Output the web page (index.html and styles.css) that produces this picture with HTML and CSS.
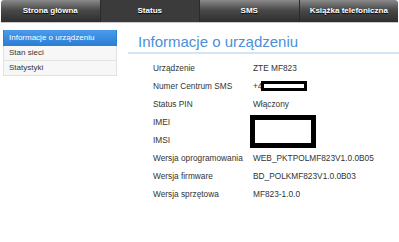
FILE: index.html
```html
<!DOCTYPE html>
<html lang="pl">
<head>
  <meta charset="UTF-8" />
  <title>Informacje o urządzeniu</title>
  <link rel="stylesheet" href="styles.css">
</head>
<body>

  <nav class="topnav">
    <a href="#">Strona główna</a>
    <a href="#" class="active">Status</a>
    <a href="#">SMS</a>
    <a href="#">Książka telefoniczna</a>
  </nav>

  <div class="layout">
    <ul class="sidemenu">
      <li class="selected">Informacje o urządzeniu</li>
      <li>Stan sieci</li>
      <li>Statystyki</li>
    </ul>

    <div class="content">
      <h1>Informacje o urządzeniu</h1>
      <table class="info">
        <tr><td>Urządzenie</td><td>ZTE MF823</td></tr>
        <tr><td>Numer Centrum SMS</td><td>+4<span class="mask-line"></span></td></tr>
        <tr><td>Status PIN</td><td>Włączony</td></tr>
        <tr><td>IMEI</td><td rowspan="2"><span class="mask-box"></span></td></tr>
        <tr><td>IMSI</td></tr>
        <tr><td>Wersja oprogramowania</td><td>WEB_PKTPOLMF823V1.0.0B05</td></tr>
        <tr><td>Wersja firmware</td><td>BD_POLKMF823V1.0.0B03</td></tr>
        <tr><td>Wersja sprzętowa</td><td>MF823-1.0.0</td></tr>
      </table>
    </div>
  </div>

</body>
</html>
```

FILE: styles.css
```css
body {
  margin: 0;
  background: #fff;
  font-family: 'Liberation Sans', Arial, sans-serif;
  color: #333;
  width: 399px;
  height: 242px;
  overflow: hidden;
}
.topnav {
  display: flex;
  height: 22px;
  margin: 0 1px 0 1px;
  border-radius: 3px 3px 0 0;
  background: linear-gradient(#8a8a8a, #4a4a4a 45%, #2e2e2e);
  border-bottom: 1px solid #c9c9c9;
}
.topnav a {
  flex: 1;
  text-align: center;
  line-height: 22px;
  font-size: 8px;
  font-weight: bold;
  color: #fff;
  text-decoration: none;
  text-shadow: 0 1px 1px #000;
  border-right: 1px solid #2a2a2a;
}
.topnav a:last-child {
  border-right: none;
}
.topnav a.active {
  background: #3b3b3b;
}
.layout {
  display: flex;
  padding: 7px 0 0 3px;
}
.sidemenu {
  list-style: none;
  margin: 0;
  padding: 0;
  width: 114px;
  font-size: 8px;
}
.sidemenu li {
  height: 14px;
  line-height: 14px;
  padding-left: 5px;
  background: #f7f7f7;
  border: 1px solid #e2e2e2;
  border-top: none;
}
.sidemenu li.selected {
  background: linear-gradient(#4a9bec, #2d7fd6);
  border-color: #2d7fd6;
  color: #fff;
  height: 15px;
  line-height: 15px;
}
.content {
  flex: 1;
  margin-left: 11px;
}
h1 {
  margin: 0;
  padding: 3px 0 2px 10px;
  font-size: 15px;
  line-height: 17px;
  font-weight: normal;
  color: #4a90d9;
  border-bottom: 2px solid #d4e6f6;
}
.info {
  border-collapse: collapse;
  margin: 5px 0 0 25px;
  font-size: 8.3px;
}
.info td {
  height: 18px;
  padding: 0;
  vertical-align: middle;
}
.info td:first-child {
  width: 100px;
}
.mask-line {
  display: inline-block;
  width: 40px;
  height: 4px;
  border: 3px solid #000;
  background: #fff;
  vertical-align: middle;
  margin-left: -1px;
}
.mask-box {
  display: block;
  width: 56px;
  height: 23px;
  border: 5px solid #000;
  background: #fff;
  margin-left: -3px;
}
```
